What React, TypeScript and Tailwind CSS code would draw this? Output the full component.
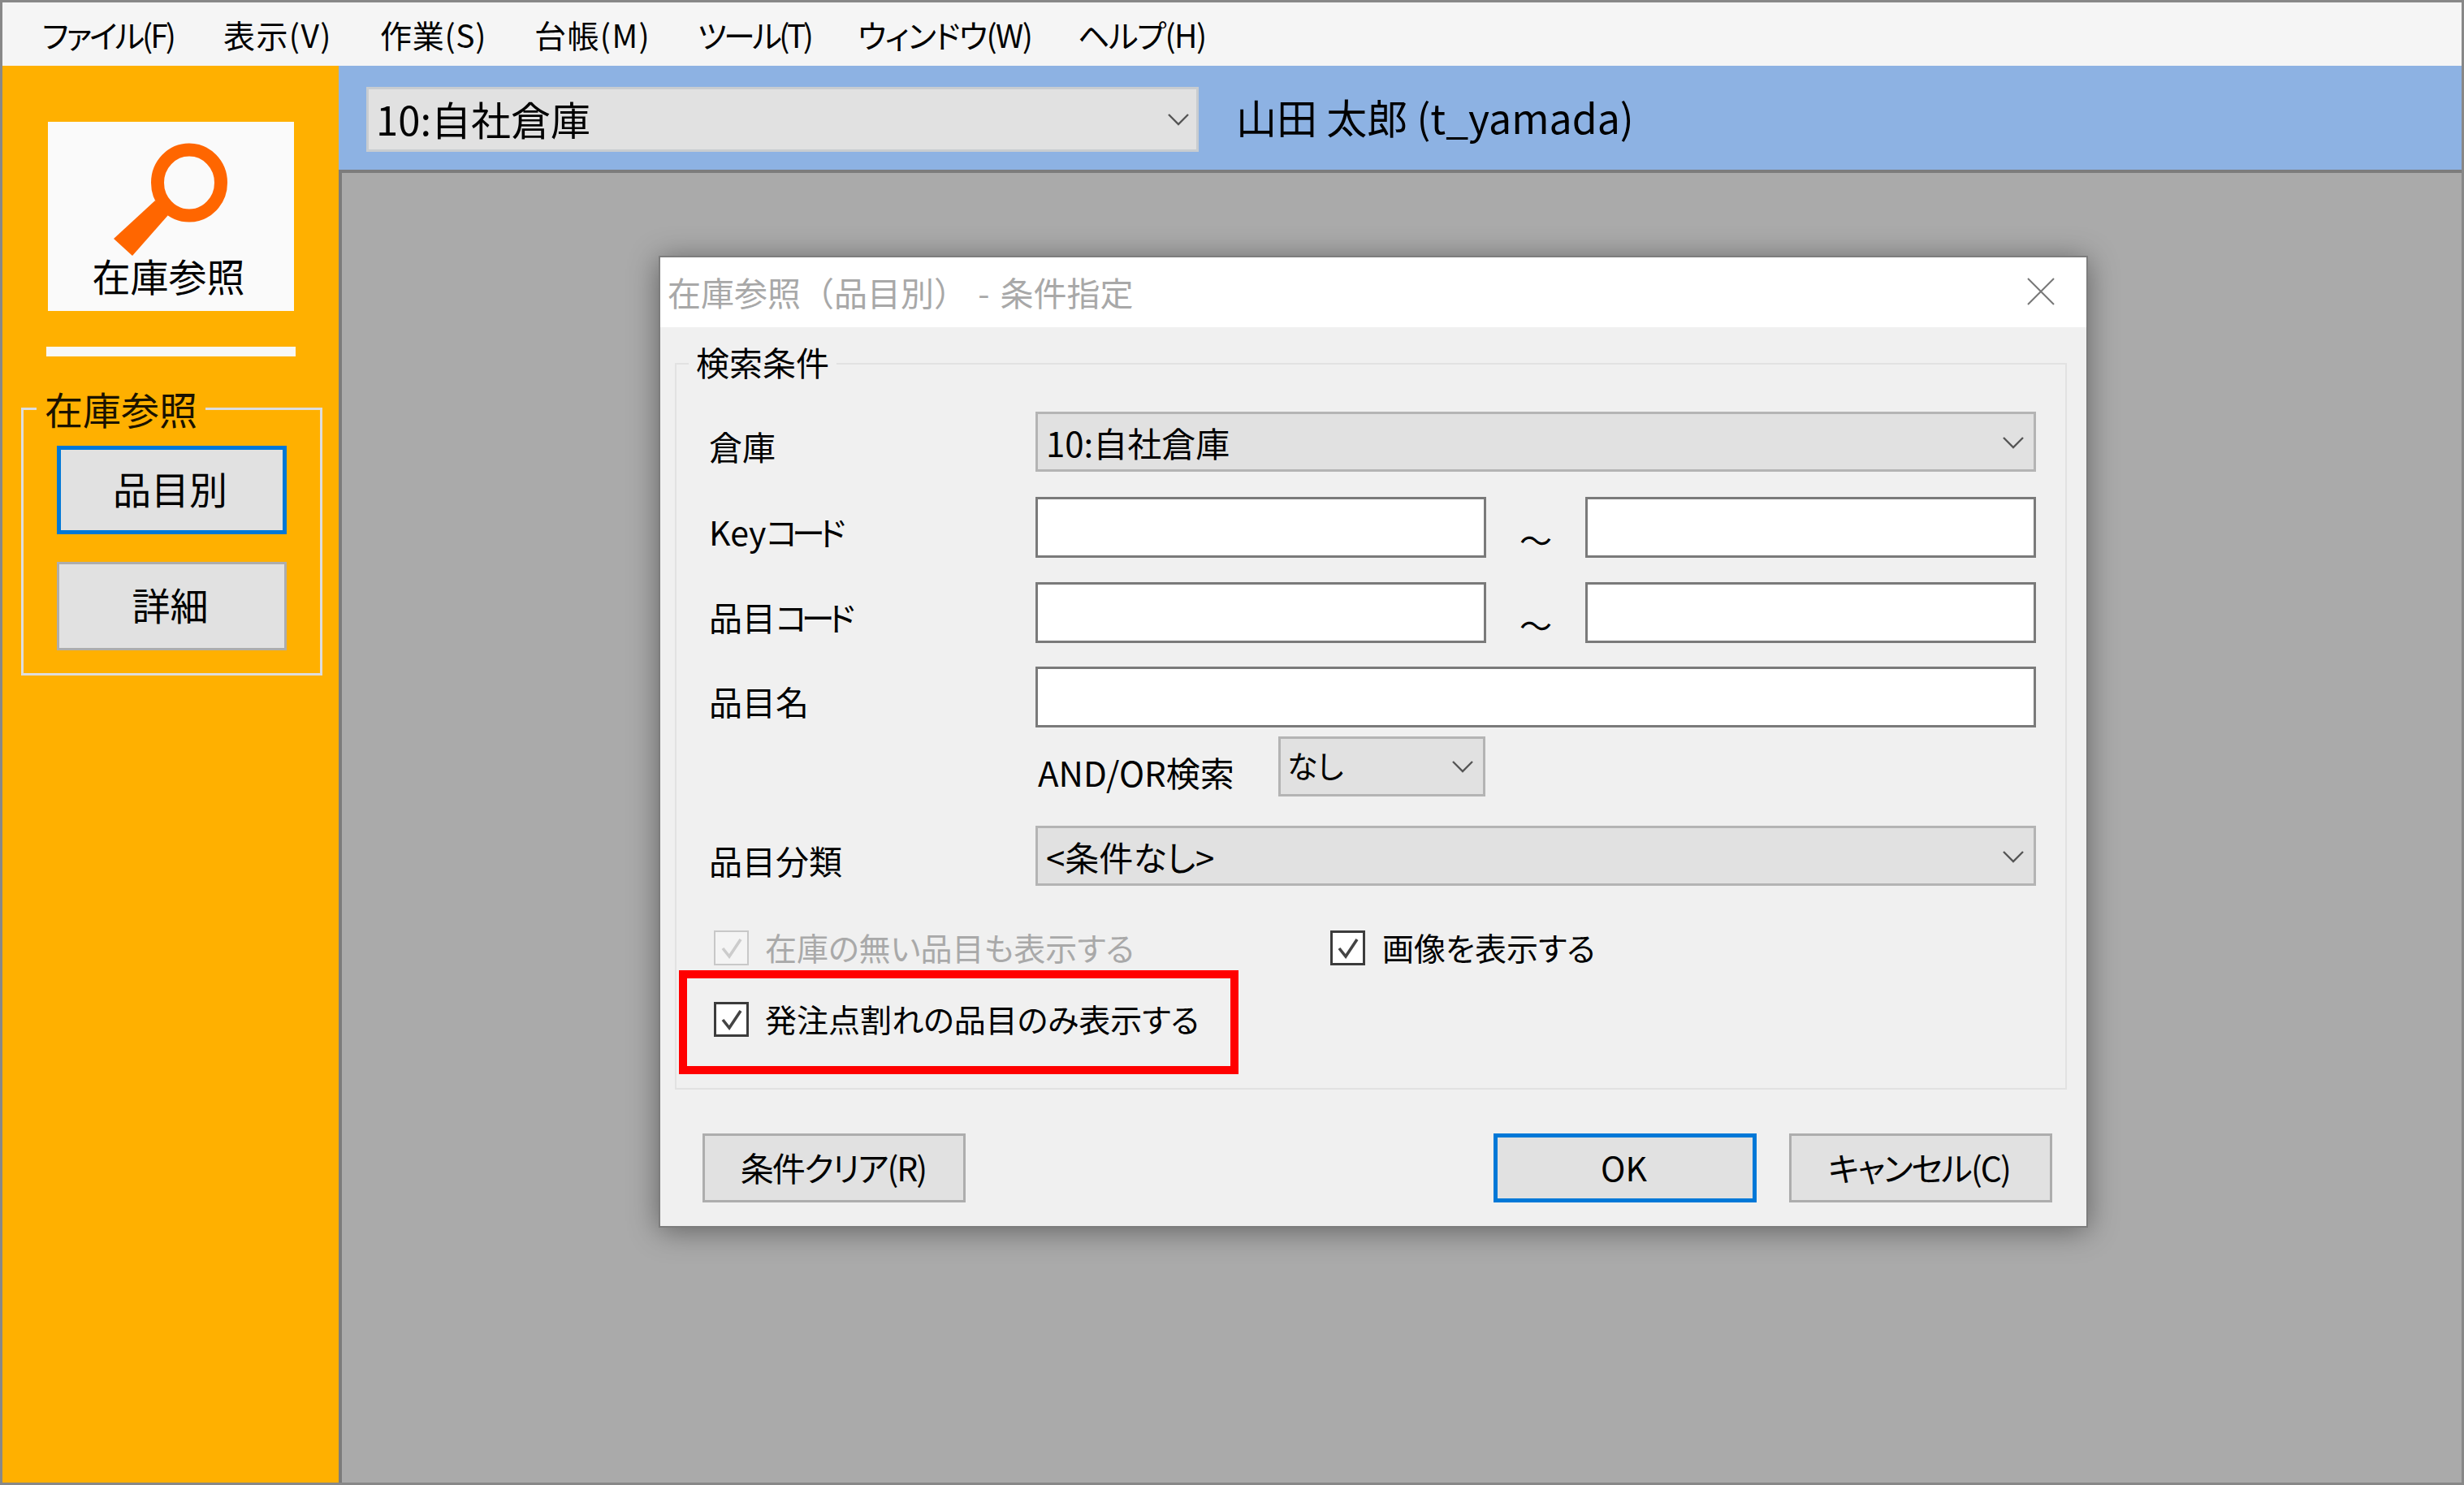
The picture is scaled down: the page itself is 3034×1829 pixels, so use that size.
import React from "react";

const Chevron = ({ className }: { className: string }) => (
  <svg className={className} viewBox="0 0 28 16" fill="none">
    <polyline points="2,2 14,14 26,2" stroke="#555" strokeWidth="2.4" />
  </svg>
);

const Check = ({ disabled }: { disabled?: boolean }) => (
  <span
    className={
      disabled
        ? "flex h-[43px] w-[43px] shrink-0 items-center justify-center border-2 border-[#c8c8c8] bg-[#f4f4f4]"
        : "flex h-[43px] w-[43px] shrink-0 items-center justify-center border-[3px] border-[#3c3c3c] bg-white"
    }
  >
    <svg className="h-[26px] w-[28px]" viewBox="0 0 28 26" fill="none">
      <polyline points="3,13 11,23 25,2" stroke={disabled ? "#cccccc" : "#444444"} strokeWidth="3.6" />
    </svg>
  </span>
);

const FieldLabel = ({ children }: { children: React.ReactNode }) => (
  <div className="-ml-[1px] w-[402px] shrink-0 whitespace-nowrap pt-[13px] text-[41px] leading-[58px] text-black">{children}</div>
);

const TextBox = ({ className }: { className: string }) => (
  <div className={"h-[75px] border-[3px] border-[#7a7a7a] bg-white " + className} />
);

const Tilde = () => (
  <span className="w-[122px] pt-[29px] text-center text-[40px] leading-[46px] text-black">～</span>
);

const DialogSelect = ({ text }: { text: string }) => (
  <div className="flex h-[74px] w-[1232px] items-center justify-between border-[3px] border-[#b4b4b4] bg-[#e1e1e1] pl-[10px] pr-[11px] pt-[2px] text-[42px] leading-none text-black">
    <span>{text}</span>
    <Chevron className="h-[16px] w-[28px]" />
  </div>
);

const Menu = ({ children, className }: { children: React.ReactNode; className: string }) => (
  <span className={"whitespace-nowrap text-[39px] leading-none text-black " + className}>{children}</span>
);

export default function App() {
  return (
    <div className="flex h-[1829px] w-[3034px] flex-col overflow-hidden border-[3px] border-[#888888] font-['Noto_Sans_CJK_JP',sans-serif] [font-feature-settings:'palt']">
      <div className="flex h-[78px] shrink-0 items-center bg-[#f5f5f5] pl-[49px]">
        <Menu className="w-[223px] tracking-[-3px]">ファイル(F)</Menu>
        <Menu className="w-[193px] tracking-[1.4px]">表示(V)</Menu>
        <Menu className="w-[190px] tracking-[0.7px]">作業(S)</Menu>
        <Menu className="w-[201px] tracking-[1.4px]">台帳(M)</Menu>
        <Menu className="w-[197px] tracking-[-3.5px]">ツール(T)</Menu>
        <Menu className="w-[271px] tracking-[-1.5px]">ウィンドウ(W)</Menu>
        <Menu className="w-[160px] tracking-[-1.5px]">ヘルプ(H)</Menu>
      </div>

      <div className="flex min-h-0 flex-1">
        <aside className="w-[414px] shrink-0 bg-[#ffb000]">
          <div className="ml-[56px] mt-[69px] flex h-[233px] w-[303px] flex-col items-center bg-[#fafafa] pr-[6px] pt-[20px]">
            <svg className="h-[150px] w-[155px]" viewBox="0 0 155 150">
              <path d="M61 77 L77 95 L33 145 L10 124 Z" fill="#ff6600" />
              <ellipse cx="103" cy="55" rx="39" ry="40.5" fill="none" stroke="#ff6600" strokeWidth="16" />
            </svg>
            <div className="-mt-[6px] text-[47px] leading-[50px] text-black">在庫参照</div>
          </div>
          <div className="ml-[54px] mt-[44px] h-[12px] w-[307px] bg-[#f8f8f8]" />
          <fieldset className="ml-[23px] mt-[34px] h-[359px] w-[371px] border-[3px] border-[#dddddd]">
            <legend className="ml-[16px] h-[60px] px-[10px] pt-[4px] text-[47px] leading-[52px] text-[#1a1200]">在庫参照</legend>
            <div className="ml-[41px] mt-[16px] flex h-[109px] w-[283px] items-center justify-center border-[5px] border-[#0078d7] bg-[#e1e1e1] pb-[6px] pr-[4px] text-[47px] leading-none text-black">品目別</div>
            <div className="ml-[41px] mt-[34px] flex h-[109px] w-[283px] items-center justify-center border-[3px] border-[#adadad] bg-[#e1e1e1] pb-[6px] pr-[4px] text-[47px] leading-none text-black">詳細</div>
          </fieldset>
        </aside>

        <div className="flex min-w-0 flex-1 flex-col">
          <div className="flex h-[128px] shrink-0 items-center bg-[#8db2e3] pl-[34px] pt-[4px]">
            <div className="flex h-[80px] w-[1025px] items-center justify-between border-[3px] border-[#c8ccd0] bg-[#e1e1e1] pl-[9px] pr-[8px]">
              <span className="mb-[3px] text-[49px] leading-none text-black">10:自社倉庫</span>
              <Chevron className="h-[16px] w-[28px]" />
            </div>
            <span className="mb-[8px] ml-[46px] text-[50px] leading-none text-black">山田 太郎 (t_yamada)</span>
          </div>

          <main className="min-h-0 flex-1 border-l-[4px] border-t-[4px] border-[#7c7c7c] bg-[#aaaaaa] pl-[390px] pt-[102px]">
            <div className="w-[1760px] border-2 border-[#7d7d7d] bg-[#f0f0f0] shadow-[0_4px_34px_rgba(0,0,0,0.42)]">
              <div className="flex h-[86px] items-center justify-between bg-white pb-[2px] pl-[9px] pr-[38px]">
                <span className="text-[41px] leading-none text-[#a8a8a8] [font-feature-settings:normal]">
                  在庫参照（品目別）<span className="px-[4px]"> - </span>条件指定
                </span>
                <svg className="h-[36px] w-[36px]" viewBox="0 0 36 36" fill="none">
                  <path d="M2 2 L34 34 M34 2 L2 34" stroke="#777777" strokeWidth="2" />
                </svg>
              </div>

              <fieldset className="ml-[18px] mr-[24px] mt-[25px] border-2 border-[#e2e2e2] pb-[63px] pl-[41px] pr-[36px]">
                <legend className="-ml-[26px] h-[40px] px-[9px] text-[41px] leading-[34px] text-black">検索条件</legend>

                <div className="mt-[39px] flex">
                  <FieldLabel>倉庫</FieldLabel>
                  <DialogSelect text="10:自社倉庫" />
                </div>

                <div className="mt-[31px] flex">
                  <FieldLabel>Key<span className="tracking-[-7px]">コード</span></FieldLabel>
                  <TextBox className="w-[555px]" />
                  <Tilde />
                  <TextBox className="w-[555px]" />
                </div>

                <div className="mt-[30px] flex">
                  <FieldLabel>品目<span className="tracking-[-7px]">コード</span></FieldLabel>
                  <TextBox className="w-[555px]" />
                  <Tilde />
                  <TextBox className="w-[555px]" />
                </div>

                <div className="mt-[29px] flex">
                  <FieldLabel>品目名</FieldLabel>
                  <TextBox className="w-[1232px]" />
                </div>

                <div className="ml-[404px] mt-[11px] flex h-[74px]">
                  <span className="w-[296px] pt-[16px] text-[42px] leading-[56px] text-black">AND/OR検索</span>
                  <div className="flex w-[255px] items-center justify-between border-[3px] border-[#b4b4b4] bg-[#e1e1e1] pb-[4px] pl-[8px] pr-[11px] text-[38px] leading-none text-black">
                    <span>なし</span>
                    <Chevron className="mt-[4px] h-[16px] w-[28px]" />
                  </div>
                </div>

                <div className="mt-[36px] flex">
                  <FieldLabel>品目分類</FieldLabel>
                  <DialogSelect text="<条件なし>" />
                </div>

                <div className="mt-[55px] flex items-center">
                  <div className="flex w-[764px] items-center gap-[20px] pl-[5px] text-[39px] leading-none text-[#a9a9a9]">
                    <Check disabled />
                    <span className="mb-[3px]">在庫の無い品目も表示する</span>
                  </div>
                  <div className="flex items-center gap-[21px] text-[39px] leading-none text-black">
                    <Check />
                    <span className="mb-[3px]">画像を表示する</span>
                  </div>
                </div>

                <div className="relative mt-[45px] flex items-center gap-[20px] pl-[5px] text-[39px] leading-none text-black">
                  <Check />
                  <span className="mb-[3px]">発注点割れの品目のみ表示する</span>
                  <div className="absolute left-[-38px] top-[-39px] h-[128px] w-[689px] border-[10px] border-[#ff0000]" />
                </div>
              </fieldset>

              <div className="flex justify-between pb-[29px] pl-[52px] pr-[42px] pt-[54px] text-[41px] leading-none text-black">
                <div className="flex h-[85px] w-[324px] items-center justify-center border-[3px] border-[#adadad] bg-[#e1e1e1] pb-[2px] pr-[2px] tracking-[-2px]">条件クリア(R)</div>
                <div className="flex gap-[40px]">
                  <div className="flex h-[85px] w-[324px] items-center justify-center border-[5px] border-[#0078d7] bg-[#e1e1e1] pb-[2px] pr-[3px]">OK</div>
                  <div className="flex h-[85px] w-[324px] items-center justify-center border-[3px] border-[#adadad] bg-[#e1e1e1] pb-[2px] pr-[4px] tracking-[-2px]">キャンセル(C)</div>
                </div>
              </div>
            </div>
          </main>
        </div>
      </div>
    </div>
  );
}
